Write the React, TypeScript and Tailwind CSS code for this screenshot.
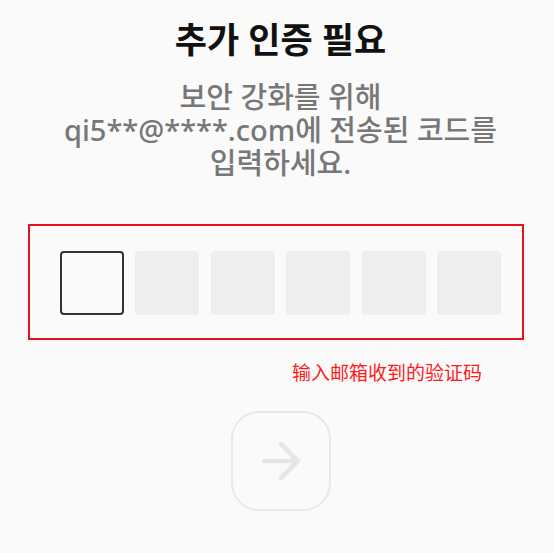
import { ArrowRight } from "lucide-react";

export default function App() {
  const cells = [0, 1, 2, 3, 4, 5];

  return (
    <div
      className="min-h-[553px] w-full bg-[#fafafa] pl-[7px]"
      style={{ fontFamily: '"Noto Sans", "Noto Sans CJK KR", sans-serif' }}>
      <div className="flex flex-col items-center pt-[18px]">
        <h1 className="text-[35px] leading-[44px] font-bold text-[#111]">
          추가 인증 필요
        </h1>
        <p className="mt-[18px] w-[520px] text-center text-[29px] leading-[33px] font-medium text-[#777]">
          보안 강화를 위해
          <br />
          qi5**@****.com에 전송된 코드를
          <br />
          입력하세요.
        </p>

        <div className="relative mt-[72px]">
          <div className="pointer-events-none absolute -top-[27px] -bottom-[25px] -left-[32px] -right-[23px] border-2 border-[#e8121e]" />
          <div className="flex gap-[11.4px]">
            {cells.map((i) => (
              <div
                key={i}
                className={
                  i === 0
                    ? "h-[64px] w-[64px] rounded-[4px] border-2 border-[#333]"
                    : "h-[64px] w-[64px] rounded-[4px] bg-[#eeeeee]"
                }
              />
            ))}
          </div>
        </div>
      </div>

      <div className="mt-[45px] flex justify-end pr-[72px]">
        <span
          className="text-[19px] leading-[24px] text-[#ff1a1a]"
          style={{ fontFamily: '"Noto Sans CJK SC", sans-serif' }}>
          输入邮箱收到的验证码
        </span>
      </div>

      <div className="mt-[27px] flex justify-center">
        <button className="flex h-[100px] w-[100px] items-center justify-center rounded-[28px] border-2 border-[#e8e8e8]">
          <ArrowRight className="h-[58px] w-[58px] text-[#e6e6e6]" strokeWidth={1.9} />
        </button>
      </div>
    </div>
  );
}
